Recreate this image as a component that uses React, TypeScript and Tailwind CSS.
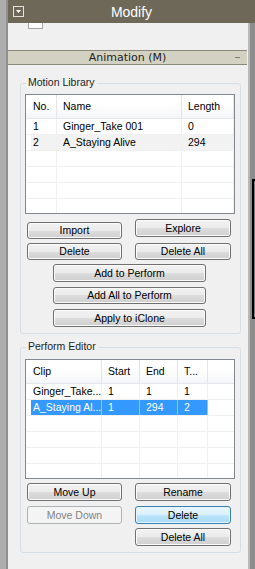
import React from "react";

type Col = { label: string; w: number };

const btnBase =
  "flex items-center justify-center rounded-[3px] border text-[10.5px] leading-none";
const btnNormal =
  "border-[#707070] text-black bg-[linear-gradient(to_bottom,#f2f2f2_0%,#ebebeb_50%,#dddddd_50%,#cfcfcf_100%)] shadow-[inset_0_0_0_1px_#fbfbfb]";
const btnFocus =
  "border-[#3c7fb1] text-black bg-[linear-gradient(to_bottom,#eaf6fd_0%,#d9f0fc_50%,#bee6fd_50%,#a7d9f5_100%)] shadow-[inset_0_0_0_1px_#e6f5fd]";
const btnDisabled = "border-[#adb2b5] text-[#838383] bg-[#f4f4f4]";

function Btn({
  children,
  className = "",
  kind = "normal",
}: {
  children: React.ReactNode;
  className?: string;
  kind?: "normal" | "focus" | "disabled";
}) {
  const look = kind === "focus" ? btnFocus : kind === "disabled" ? btnDisabled : btnNormal;
  return <div className={`${btnBase} ${look} ${className}`}>{children}</div>;
}

function ListTable({
  cols,
  rows,
  filler = 0,
  selected = -1,
  shaded = -1,
}: {
  cols: Col[];
  rows: string[][];
  filler?: number;
  selected?: number;
  shaded?: number;
}) {
  const all = [...rows];
  while (all.length < 6) all.push(cols.map(() => ""));
  return (
    <div className="h-[120px] w-[210px] overflow-hidden border border-[#828790] bg-white">
      {/* header */}
      <div className="flex h-[24px] border-b border-[#e3e6ea] bg-[linear-gradient(to_bottom,#ffffff_0%,#ffffff_45%,#f4f5f7_100%)]">
        {cols.map((c, i) => (
          <div
            key={c.label}
            style={{ width: c.w }}
            className={`flex shrink-0 items-center border-r border-[#e3e5e8] ${i === 0 ? "pl-[7px]" : "pl-[6px]"}`}
          >
            {c.label}
          </div>
        ))}
        {filler > 0 && <div style={{ width: filler }} className="shrink-0" />}
      </div>
      {/* body */}
      {all.map((r, ri) => {
        const sel = ri === selected;
        const shade = ri === shaded;
        return (
          <div key={ri} className="flex h-[16px] border-b border-[#f0f0f0]">
            <div className="w-[5px] shrink-0" />
            {r.map((cell, ci) => (
              <div
                key={ci}
                style={{ width: ci === 0 ? cols[ci].w - 5 : cols[ci].w }}
                className={`flex shrink-0 items-center overflow-hidden whitespace-nowrap border-r ${
                  ci === 0 ? "pl-[2px]" : "pl-[6px]"
                } ${
                  sel
                    ? "border-[#8cc4ff] bg-[#3399ff] text-white"
                    : shade
                      ? "border-[#f0f0f0] bg-[#f2f2f2]"
                      : "border-[#f0f0f0]"
                }`}
              >
                {cell}
              </div>
            ))}
            {filler > 0 && <div style={{ width: filler }} className="shrink-0" />}
          </div>
        );
      })}
    </div>
  );
}

function Group({
  label,
  className = "",
  children,
}: {
  label: string;
  className?: string;
  children: React.ReactNode;
}) {
  return (
    <div className={`relative ml-[12px] w-[221px] rounded-[3px] border border-[#d5dfe5] pl-[4px] ${className}`}>
      <div className="absolute left-[5px] top-[-8px] bg-[#f0f0f0] px-[2px] leading-[13px] text-[#1e1e1e]">
        {label}
      </div>
      {children}
    </div>
  );
}

export default function App() {
  return (
    <div className="flex h-[569px] w-[255px] overflow-hidden bg-[#f0f0f0] font-['Liberation_Sans',Arial,sans-serif] text-[10.5px] text-black">
      {/* left gutter */}
      <div className="w-[8px] shrink-0 border-r-2 border-[#8f8f8f] bg-[#adadad]" />

      <div className="flex w-[247px] flex-col">
        {/* title bar */}
        <div className="grid h-[23px] shrink-0 grid-cols-[16px_1fr_16px] items-center bg-[#6d6857]">
          <div className="pl-[5px]">
            <div className="flex h-[11px] w-[11px] items-center justify-center border border-[#e4e2da]">
              <svg width="5" height="3" viewBox="0 0 5 3">
                <path d="M0 0H5L2.5 3Z" fill="#ffffff" />
              </svg>
            </div>
          </div>
          <div className="text-center text-[14px] leading-none text-white">Modify</div>
          <div />
        </div>

        <div className="flex flex-1">
          {/* panel */}
          <div className="flex w-[240px] flex-col">
            <div className="ml-[20px] h-[6px] w-[15px] border border-t-0 border-[#a5a5a5] bg-white" />

            <div className="mt-[21px] grid h-[15px] w-[239px] grid-cols-[20px_1fr_20px] items-center border-y border-[#8a8878] bg-[#d3d1c1] font-['DejaVu_Sans',sans-serif] text-[11px] text-[#1e1e1e]">
              <div />
              <div className="text-center leading-none">Animation (M)</div>
              <div className="flex justify-end pr-[7px]">
                <div className="h-[1px] w-[5px] bg-[#7c7a70]" />
              </div>
            </div>

            <Group label="Motion Library" className="mt-[18px] h-[251px] pt-[10px]">
              <ListTable
                cols={[
                  { label: "No.", w: 31 },
                  { label: "Name", w: 125 },
                  { label: "Length", w: 52 },
                ]}
                rows={[
                  ["1", "Ginger_Take 001", "0"],
                  ["2", "A_Staying Alive", "294"],
                ]}
                shaded={1}
              />
              <div className="mt-[5px] flex items-start">
                <Btn className="ml-[2px] mt-[3px] h-[17px] w-[95px]">Import</Btn>
                <Btn className="ml-[13px] h-[18px] w-[96px]">Explore</Btn>
              </div>
              <div className="mt-[4px] flex">
                <Btn className="ml-[2px] h-[17px] w-[95px]">Delete</Btn>
                <Btn className="ml-[13px] h-[17px] w-[96px]">Delete All</Btn>
              </div>
              <Btn className="ml-[28px] mt-[4px] h-[18px] w-[153px]">Add to Perform</Btn>
              <Btn className="ml-[28px] mt-[5px] h-[17px] w-[153px]">Add All to Perform</Btn>
              <Btn className="ml-[28px] mt-[5px] h-[18px] w-[153px]">Apply to iClone</Btn>
            </Group>

            <Group label="Perform Editor" className="mt-[13px] h-[206px] pt-[11px]">
              <ListTable
                cols={[
                  { label: "Clip", w: 76 },
                  { label: "Start", w: 38 },
                  { label: "End", w: 38 },
                  { label: "T...", w: 30 },
                ]}
                filler={26}
                rows={[
                  ["Ginger_Take...", "1", "1", "1"],
                  ["A_Staying Al...", "1", "294", "2"],
                ]}
                selected={1}
              />
              <div className="mt-[4px] flex">
                <Btn className="ml-[2px] h-[18px] w-[95px]">Move Up</Btn>
                <Btn className="ml-[13px] h-[18px] w-[96px]">Rename</Btn>
              </div>
              <div className="mt-[5px] flex">
                <Btn kind="disabled" className="ml-[2px] h-[18px] w-[95px]">
                  Move Down
                </Btn>
                <Btn kind="focus" className="ml-[13px] h-[18px] w-[96px]">
                  Delete
                </Btn>
              </div>
              <Btn className="ml-[110px] mt-[4px] h-[18px] w-[96px]">Delete All</Btn>
            </Group>
          </div>

          {/* right edge / scroll strip */}
          <div className="flex w-[7px] shrink-0">
            <div className="w-[2px] bg-[#b8b8b8]" />
            <div className="flex-1 bg-[#8d8d8d] pl-[2px] pt-[156px]">
              <div className="h-[140px] border-2 border-r-0 border-black bg-[#7b7b7b]" />
            </div>
          </div>
        </div>
      </div>
    </div>
  );
}
